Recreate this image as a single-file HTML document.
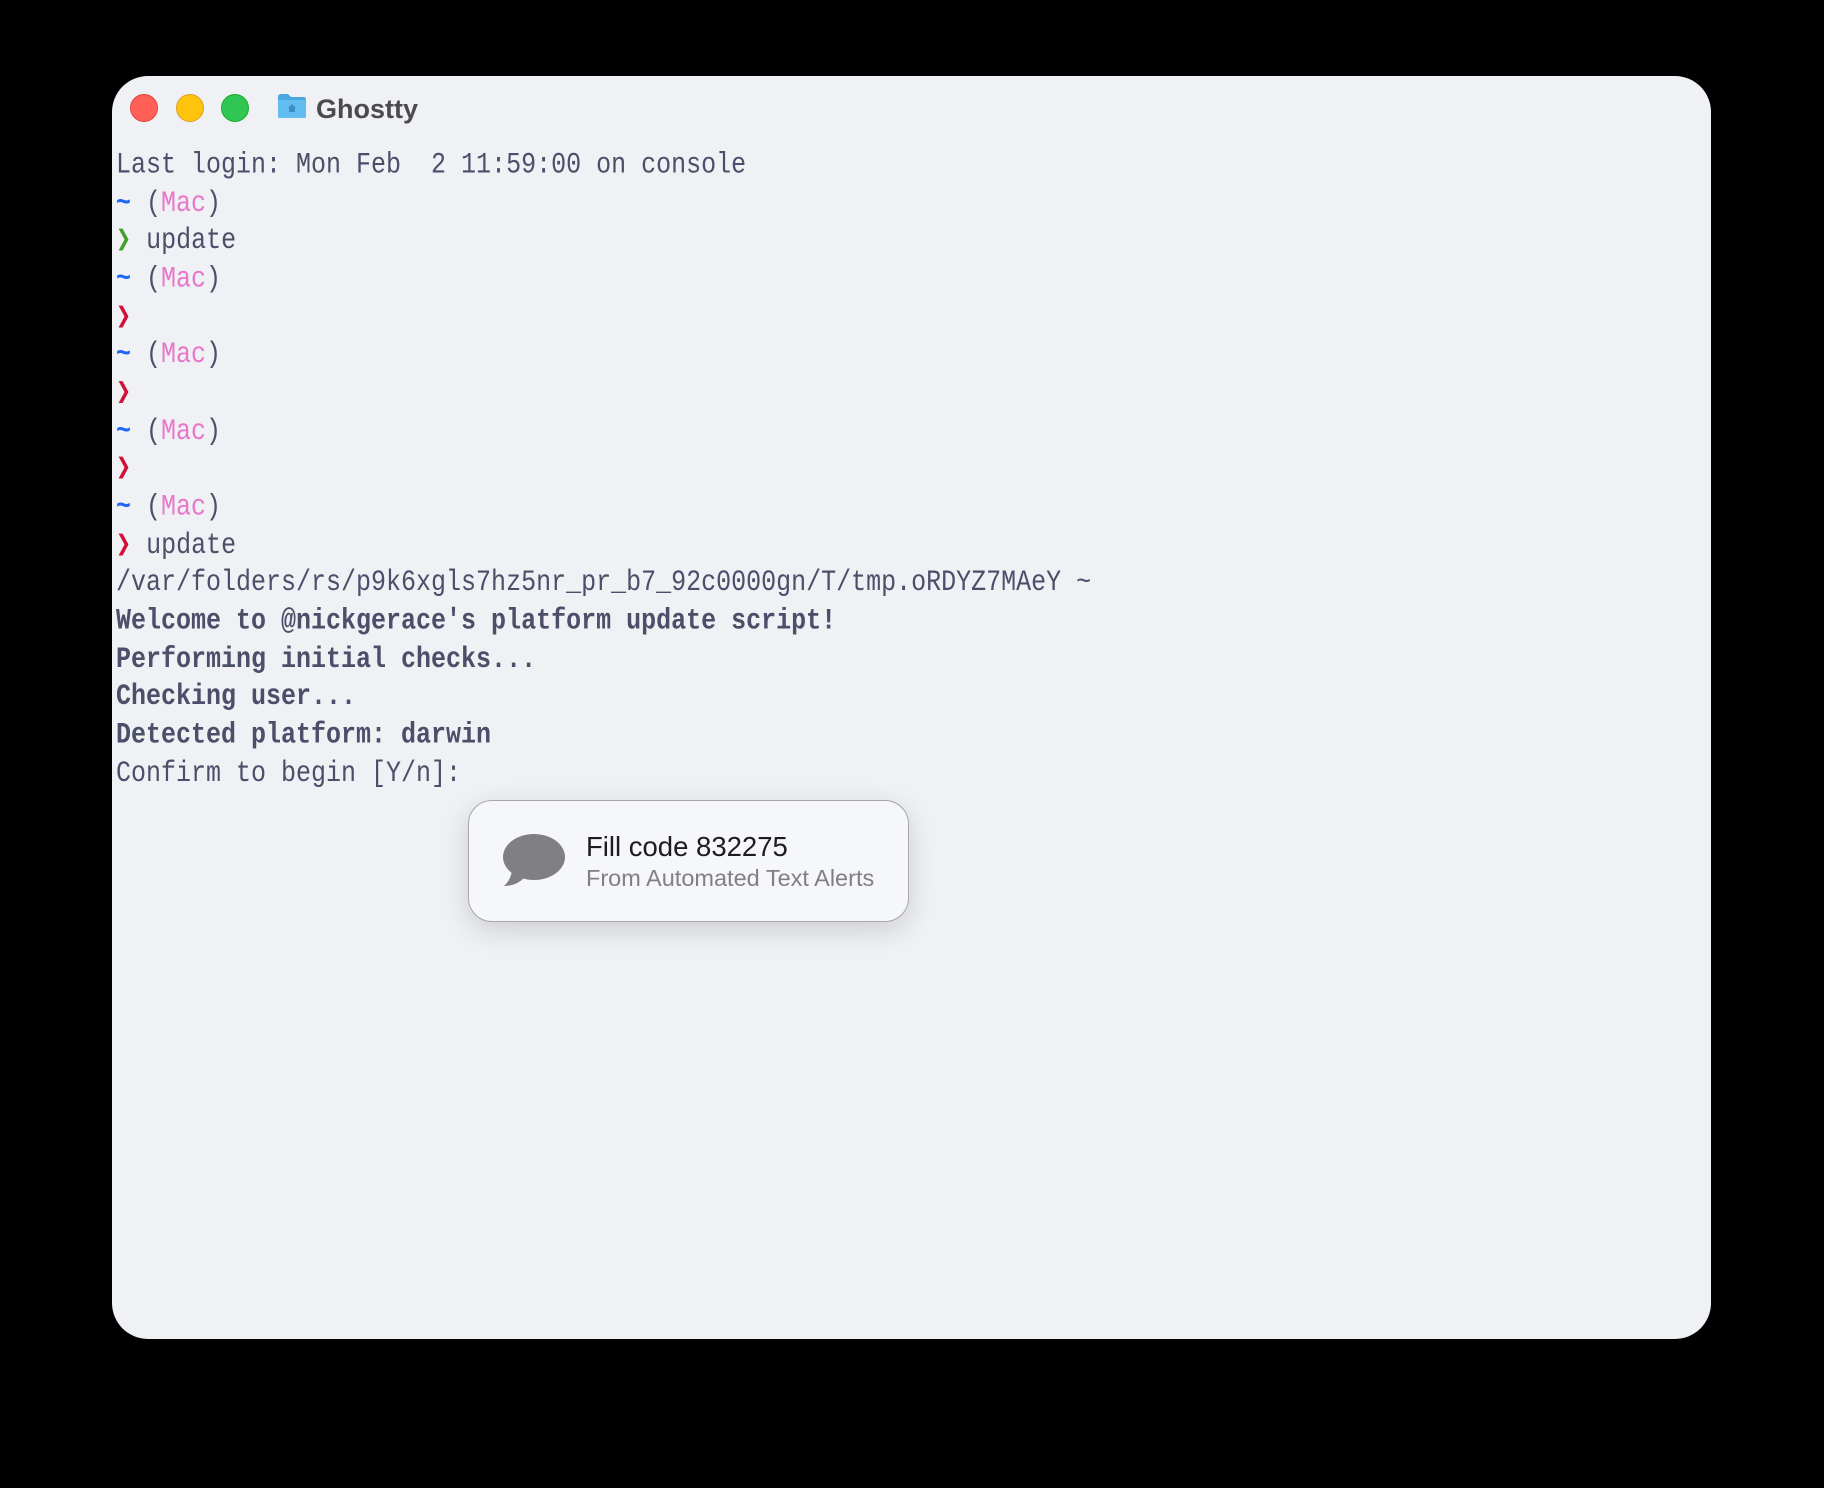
<!DOCTYPE html>
<html><head><meta charset="utf-8"><style>
html,body{margin:0;padding:0;background:#000;width:1824px;height:1488px;overflow:hidden}
.win{position:absolute;left:112px;top:76px;width:1599px;height:1263px;background:#eff1f5;border-radius:36px;overflow:hidden}
.tl{position:absolute;top:94px;width:28px;height:28px;border-radius:50%}
pre{position:absolute;left:116px;top:146px;margin:0;font-family:"Liberation Mono",monospace;font-size:25px;line-height:31.67px;color:#4c4f69;transform:scaleY(1.2);transform-origin:0 0;letter-spacing:0}
.b{color:#1e66f5;font-weight:bold}.p{color:#ea76cb}.g{color:#40a02b;font-weight:bold}.r{color:#d20f39;font-weight:bold}.w{font-weight:bold}
.title{position:absolute;left:316px;top:94px;font:bold 27px "Liberation Sans",sans-serif;color:#4a4a4f}
.pop{position:absolute;left:468px;top:800px;width:439px;height:120px;background:#f6f7f9;border:1px solid #a8a8ac;border-radius:24px;box-shadow:0 8px 28px rgba(0,0,0,.15)}
.t1{position:absolute;left:117px;top:30px;font:27.5px "Liberation Sans",sans-serif;color:#1d1d1f}
.t2{position:absolute;left:117px;top:64px;font:23.5px "Liberation Sans",sans-serif;color:#808085}
</style></head><body>
<div class="win"></div>
<div class="tl" style="left:130px;background:#ff5f57;border:1px solid #e0443e;box-sizing:border-box"></div>
<div class="tl" style="left:176px;border:1px solid #dea123;box-sizing:border-box;background:#fdc40b"></div>
<div class="tl" style="left:221px;border:1px solid #1aab29;box-sizing:border-box;background:#31c553"></div>
<svg style="position:absolute;left:277px;top:93px" width="30" height="26" viewBox="0 0 30 26"><path d="M1 4 Q1 1 4 1 H11 L14 4 H27 Q29 4 29 7 V23 Q29 25 27 25 H3 Q1 25 1 23Z" fill="#4aa8e0"/><rect x="1" y="7" width="28" height="18" rx="2" fill="#62bdf0"/><path d="M15 11 L19 15 H18 V19 H12 V15 H11Z" fill="#3a8ec4"/></svg>
<div class="title">Ghostty</div>
<pre>Last login: Mon Feb  2 11:59:00 on console
<span class="b">~</span> (<span class="p">Mac</span>)
<span class="g">❯</span> update
<span class="b">~</span> (<span class="p">Mac</span>)
<span class="r">❯</span>
<span class="b">~</span> (<span class="p">Mac</span>)
<span class="r">❯</span>
<span class="b">~</span> (<span class="p">Mac</span>)
<span class="r">❯</span>
<span class="b">~</span> (<span class="p">Mac</span>)
<span class="r">❯</span> update
/var/folders/rs/p9k6xgls7hz5nr_pr_b7_92c0000gn/T/tmp.oRDYZ7MAeY ~
<span class="w">Welcome to @nickgerace's platform update script!</span>
<span class="w">Performing initial checks...</span>
<span class="w">Checking user...</span>
<span class="w">Detected platform: darwin</span>
Confirm to begin [Y/n]:</pre>
<div class="pop">
<svg style="position:absolute;left:31px;top:32px" width="66" height="56" viewBox="0 0 66 56"><ellipse cx="34" cy="24" rx="31" ry="23" fill="#808082"/><path d="M12 38 Q10 48 4 53 Q16 53 24 45Z" fill="#808082"/></svg>
<div class="t1">Fill code 832275</div>
<div class="t2">From Automated Text Alerts</div>
</div>
</body></html>
